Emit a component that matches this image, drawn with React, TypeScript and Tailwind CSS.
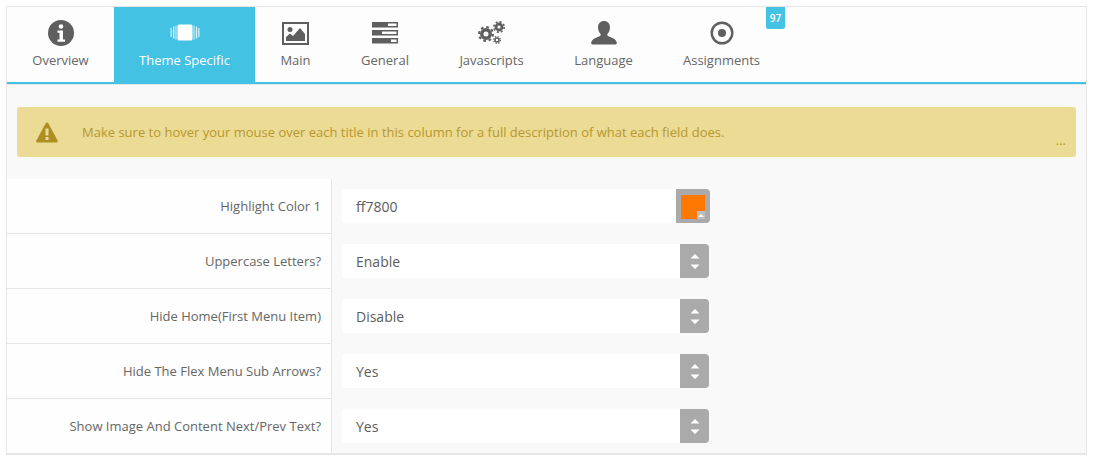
import React from 'react';

const font = { fontFamily: '"Open Sans", sans-serif' };

function InfoIcon() {
  return (
    <svg width="28" height="28" viewBox="0 0 28 28" className="text-[#5f5f5f]">
      <circle cx="14" cy="14" r="13" fill="currentColor" />
      <circle cx="14" cy="7.5" r="2.3" fill="#fff" />
      <path d="M10.5 11.5h5.5v9h2v2.2h-7.500v-2.200h2v-6.800h-2z" fill="#fff" />
    </svg>
  );
}

function SlidesIcon() {
  return (
    <svg width="30" height="18" viewBox="0 0 30 18" fill="#fff">
      <rect x="7.500" y="0.500" width="15" height="16" rx="1.500" />
      <rect x="0.500" y="4" width="1.200" height="9" opacity="0.800" />
      <rect x="3" y="2.500" width="1.400" height="12" opacity="0.800" />
      <rect x="5.500" y="1.500" width="1" height="14" opacity="0.800" />
      <rect x="23.500" y="1.500" width="1" height="14" opacity="0.800" />
      <rect x="25.800" y="2.500" width="1.400" height="12" opacity="0.800" />
      <rect x="28.300" y="4" width="1.200" height="9" opacity="0.800" />
    </svg>
  );
}

function ImageIcon() {
  return (
    <svg width="27" height="23" viewBox="0 0 27 23">
      <rect x="1" y="1" width="25" height="21" fill="none" stroke="#5f5f5f" strokeWidth="2" />
      <circle cx="8" cy="7.500" r="2.500" fill="#5f5f5f" />
      <path d="M4 19v-4l4-3.500 3 2.500 7-8 5 6v7z" fill="#5f5f5f" />
    </svg>
  );
}

function ServerIcon() {
  return (
    <svg width="26" height="22" viewBox="0 0 26 22" fill="#5f5f5f">
      <rect x="0" y="0" width="26" height="5.500" />
      <rect x="16" y="1.500" width="8.500" height="2.500" fill="#fff" />
      <rect x="0" y="8" width="26" height="5.500" />
      <rect x="10" y="9.500" width="14.500" height="2.500" fill="#fff" />
      <rect x="0" y="16" width="26" height="5.500" />
      <rect x="19" y="17.500" width="5.500" height="2.500" fill="#fff" />
    </svg>
  );
}

function GearsIcon() {
  return (
    <svg width="27" height="24" viewBox="0 0 27 24" fill="none" stroke="#5f5f5f">
      <circle cx="8" cy="13" r="4.250" strokeWidth="3.500" />
      <circle cx="8" cy="13" r="7" strokeWidth="2" strokeDasharray="2.750 2.750" />
      <circle cx="21" cy="6" r="3" strokeWidth="2.800" />
      <circle cx="21" cy="6" r="5.200" strokeWidth="1.600" strokeDasharray="2.040 2.040" />
      <circle cx="19" cy="19" r="2" strokeWidth="1.600" />
      <circle cx="19" cy="19" r="3.400" strokeWidth="1.200" strokeDasharray="1.340 1.340" />
    </svg>
  );
}

function UserIcon() {
  return (
    <svg width="26" height="24" viewBox="0 0 26 24" fill="#5f5f5f">
      <path d="M13 0c3.600 0 6 2.700 6 6.300 0 2.700-1 5-2.400 6.500-.5.600-.4 1.700.4 2.200 2.800 1.500 8 2.600 8.800 6.500.2 1-.3 2-1.300 2H1.500c-1 0-1.500-1-1.300-2 .8-3.900 6-5 8.800-6.500.8-.5.900-1.600.4-2.200C8 11.300 7 9 7 6.300 7 2.700 9.400 0 13 0z" />
    </svg>
  );
}

function TargetIcon() {
  return (
    <svg width="24" height="24" viewBox="0 0 24 24">
      <circle cx="12" cy="12" r="10.300" fill="none" stroke="#5f5f5f" strokeWidth="2.400" />
      <circle cx="12" cy="12" r="4" fill="#5f5f5f" />
    </svg>
  );
}

const rows = [
  { label: 'Uppercase Letters?', value: 'Enable' },
  { label: 'Hide Home(First Menu Item)', value: 'Disable' },
  { label: 'Hide The Flex Menu Sub Arrows?', value: 'Yes' },
  { label: 'Show Image And Content Next/Prev Text?', value: 'Yes' },
];

function Tab({ label, icon, className, active, badge }: { label: string; icon: React.ReactNode; className: string; active?: boolean; badge?: string }) {
  return (
    <div className={`relative flex flex-col items-center text-[13px] ${className} ${active ? 'bg-[#44c2e3] text-white' : 'text-[#666]'}`}>
      <div className="h-[26px] mt-[13px] flex items-center justify-center">{icon}</div>
      <div className="mt-[5px] leading-[18px] whitespace-nowrap">{label}</div>
      {badge && (
        <span className="absolute top-0 right-0 w-[19px] h-[22px] rounded-b-[2px] bg-[#44c2e3] text-white text-[10px] font-semibold text-center leading-[22px]">
          {badge}
        </span>
      )}
    </div>
  );
}

function SelectField({ value }: { value: string }) {
  return (
    <div className="flex w-[367px] h-[34px]">
      <div className="w-[338px] bg-white rounded-l-[3px] pl-[14px] leading-[35px] text-[14px] text-[#5c5c5c]">{value}</div>
      <div className="w-[29px] bg-[#aaaaaa] rounded-r-[4px] flex items-center justify-center">
        <svg width="10" height="15" viewBox="0 0 10 15" fill="#fff">
          <path d="M5 0l4.500 4.500h-9zM5 15l-4.500-4.500h9z" />
        </svg>
      </div>
    </div>
  );
}

export default function App() {
  return (
    <div className="bg-white p-[6px] h-[462px] overflow-hidden" style={font}>
      <div className="border border-[#e6e6e6] border-b-2 bg-[#f9f9f9] w-[1081px] h-[449px]">
        {/* tabs */}
        <div className="flex h-[75px] bg-[#fdfdfd] border-b-2 border-[#44c2e3] box-content">
          <Tab label="Overview" icon={<InfoIcon />} className="w-[107px]" />
          <Tab label="Theme Specific" icon={<SlidesIcon />} className="w-[141px]" active />
          <Tab label="Main" icon={<ImageIcon />} className="w-[81px]" />
          <Tab label="General" icon={<ServerIcon />} className="w-[98px]" />
          <Tab label="Javascripts" icon={<GearsIcon />} className="w-[115px]" />
          <Tab label="Language" icon={<UserIcon />} className="w-[109px]" />
          <Tab label="Assignments" icon={<TargetIcon />} className="w-[127px]" badge="97" />
        </div>
        <div className="border-t border-[#e6e6e6]" />

        {/* notice */}
        <div className="relative mx-[10px] mt-[22px] h-[50px] w-[1059px] rounded-[3px] bg-[#ebdb94] flex items-center text-[#b7982f] text-[13px]">
          <svg width="22" height="21" viewBox="0 0 22 21" className="ml-[19px] mr-[24px]">
            <path d="M11 0.500c.6 0 1 .3 1.300.8l9.300 17.200c.5 1 0 2-1.100 2H1.500c-1.100 0-1.600-1-1.100-2L9.700 1.300c.3-.5.700-.8 1.300-.8z" fill="#ad8f24" />
            <rect x="9.500" y="6.500" width="3" height="7" fill="#ebdb94" />
            <rect x="9.500" y="15" width="3" height="3" fill="#ebdb94" />
          </svg>
          <span className="pt-[2px]">Make sure to hover your mouse over each title in this column for a full description of what each field does.</span>
          <span className="absolute right-[10px] bottom-[10px] text-[13px] leading-[13px]">...</span>
        </div>

        {/* form */}
        <div className="mt-[22px]">
          <div className="flex h-[55px]">
            <div className="w-[325px] bg-[#fdfefd] border-b border-r border-[#e6e6e6] flex items-center justify-end pr-[10px] pt-[2px] text-[13px] text-[#666]">
              Highlight Color 1
            </div>
            <div className="pl-[10px] pt-[10px]">
              <div className="flex w-[368px] h-[34px]">
                <div className="w-[334px] bg-white rounded-l-[3px] pl-[14px] leading-[35px] text-[14px] text-[#5c5c5c]">ff7800</div>
                <div className="relative w-[34px] bg-[#aaaaaa] rounded-r-[4px]">
                  <div className="absolute left-[5px] top-[6px] w-[24px] h-[24px] bg-[#ff7800]" />
                  <div className="absolute left-[21px] top-[22px] w-[8px] h-[8px] bg-[#bdbdbd] flex items-center justify-center">
                    <div className="w-0 h-0 border-x-[3px] border-b-[3px] border-x-transparent border-b-white" />
                  </div>
                </div>
              </div>
            </div>
          </div>
          {rows.map((r) => (
            <div key={r.label} className="flex h-[55px]">
              <div className="w-[325px] bg-[#fdfefd] border-b border-r border-[#e6e6e6] flex items-center justify-end pr-[10px] pt-[2px] text-[13px] text-[#666]">
                {r.label}
              </div>
              <div className="pl-[10px] pt-[10px]">
                <SelectField value={r.value} />
              </div>
            </div>
          ))}
        </div>
      </div>
    </div>
  );
}
